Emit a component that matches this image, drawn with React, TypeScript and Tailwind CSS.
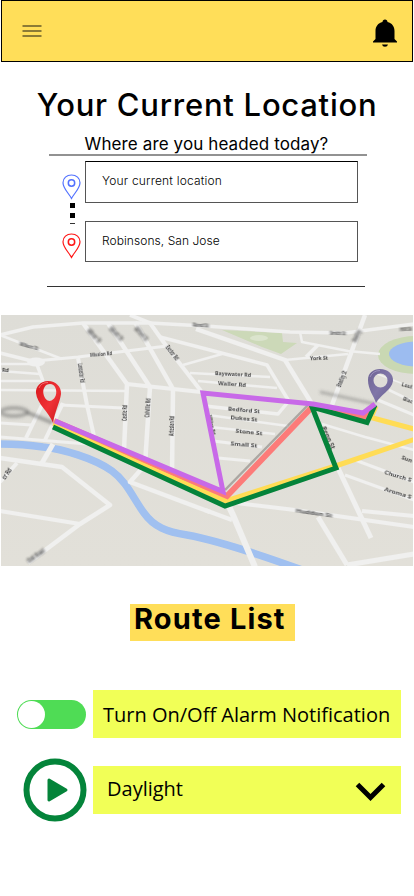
import React from 'react';

const roads: [string, number][] = [
  ['M0 335 L33 327 L83 323 L150 323 L205 326 L290 332 L345 333 L414 324', 3.5],
  ['M130 315 L150 323 L167 347 L201 391', 4],
  ['M0 335 L62 359', 2.5],
  ['M35 361 L78 357 L167 346', 3],
  ['M0 353 L36 362 L43 381', 3.5],
  ['M0 364 H38', 2.5],
  ['M0 371 L40 374', 2.5],
  ['M0 381 H44', 2.5],
  ['M0 390 L127 391', 2.5],
  ['M78 358 L87 405 L96 445', 4],
  ['M83 323 L127 384 L124 450', 4.5],
  ['M108 323 L150 387 L145 465 L130 482 L210 512', 4.5],
  ['M135 322 L173 389 L172 475', 4.5],
  ['M127 384 L201 392', 4],
  ['M60 405 L123 408', 3],
  ['M63 403 L45 440', 4],
  ['M42 405 L26 438', 4],
  ['M0 423 L32 425', 3],
  ['M0 437 L100 445', 3],
  ['M160 337 L210 350 L267 365 L290 403', 3.5],
  ['M183 365 L222 354', 2.5],
  ['M190 373 L270 377', 2.5],
  ['M198 381 L277 388', 2.5],
  ['M205 406 L278 414 L288 402', 3.5],
  ['M208 415 L288 426', 2.5],
  ['M210 427 L275 434', 2.5],
  ['M213 441 L262 447', 3],
  ['M218 458 L250 461', 3],
  ['M196 329 L285 360 L312 404', 4.5],
  ['M285 360 L348 354', 2.5],
  ['M300 332 L302 342 L348 351 L380 354', 2.5],
  ['M318 345 L306 357', 3.5],
  ['M365 315 L332 405', 4.5],
  ['M378 400 L414 415', 3],
  ['M389 390 L414 402', 2.5],
  ['M372 372 L414 388', 1.5],
  ['M322 424 L365 437 L414 450', 2.5],
  ['M355 460 L414 482', 3],
  ['M345 475 L414 500', 3],
  ['M362 511 L414 516', 4],
  ['M0 458 L62 467 L110 505 L80 524 L28 563', 4.5],
  ['M0 511 L80 524', 4],
  ['M17 463 L0 482', 4],
  ['M205 510 L232 520', 4],
  ['M225 498 L233 515 L255 567', 6],
  ['M228 502 L295 510 L414 527', 4],
  ['M318 517 L347 565', 5],
  ['M338 468 L371 538', 5],
  ['M347 565 L414 554', 5],
];

type StreetLabel = { t: string; x: number; y: number; r: number; w: number; soft?: boolean };

const labels: StreetLabel[] = [
  { t: 'Wilson St', x: 29, y: 346, r: 15, w: 19, soft: true },
  { t: 'Mission Rd', x: 101, y: 354, r: -5, w: 22 },
  { t: 'Milner St', x: 94, y: 336, r: 45, w: 17, soft: true },
  { t: 'Elliott St', x: 116, y: 334, r: 45, w: 17, soft: true },
  { t: 'Gilford St', x: 141, y: 334, r: 48, w: 17, soft: true },
  { t: 'Exeter Rd', x: 172, y: 353, r: 52, w: 17 },
  { t: 'Bond St', x: 201, y: 325, r: 4, w: 16, soft: true },
  { t: 'Lancaster Rd', x: 81, y: 373, r: 82, w: 19 },
  { t: 'Castle Rd', x: 125, y: 413, r: -88, w: 16 },
  { t: 'Colville Rd', x: 148, y: 408, r: -86, w: 19 },
  { t: 'Artesian Rd', x: 172, y: 426, r: -88, w: 20 },
  { t: 'Rd', x: 5.5, y: 370, r: 3, w: 7 },
  { t: 'er Rd', x: 7, y: 474, r: -55, w: 12 },
  { t: 'Oak Road', x: 36, y: 556, r: -35, w: 20, soft: true },
  { t: 'Bayswater Rd', x: 233, y: 374, r: 3, w: 36 },
  { t: 'Waller Rd', x: 232, y: 384, r: 4, w: 28 },
  { t: 'Bedford St', x: 244, y: 410, r: 5, w: 32 },
  { t: 'Dukes St', x: 244, y: 418.5, r: 5, w: 27 },
  { t: 'Stone St', x: 249, y: 432, r: 6, w: 27 },
  { t: 'Small St', x: 244, y: 444.5, r: 5, w: 27 },
  { t: 'York St', x: 319, y: 358, r: -2, w: 18 },
  { t: 'Smith St', x: 338, y: 333, r: 2, w: 16, soft: true },
  { t: 'Hill St', x: 406, y: 329, r: -4, w: 12, soft: true },
  { t: 'Bradley', x: 357, y: 336, r: -65, w: 13, soft: true },
  { t: 'Bradley St', x: 342, y: 379, r: -68, w: 17 },
  { t: 'Loui', x: 407, y: 385.5, r: 15, w: 11 },
  { t: 'Blac', x: 408, y: 400, r: 20, w: 10 },
  { t: 'Penn St', x: 328, y: 438, r: 66, w: 24 },
  { t: 'Milton Rd', x: 211, y: 425, r: 78, w: 20 },
  { t: 'Huddon St', x: 314, y: 513, r: 8, w: 37, soft: true },
  { t: 'Sun', x: 407, y: 459, r: 20, w: 11 },
  { t: 'Church S', x: 398, y: 476, r: 17, w: 28 },
  { t: 'Aroma S', x: 398, y: 493, r: 17, w: 28 },
];

function RouteMap() {
  return (
    <svg className="block h-[251px] w-[412px]" viewBox="1 315 412 251">
      <defs>
        <linearGradient id="ground" x1="0" y1="0" x2="0" y2="1">
          <stop offset="0" stopColor="#deddd7" />
          <stop offset="1" stopColor="#e2e0d9" />
        </linearGradient>
        <linearGradient id="redPin" x1="0" y1="0" x2="1" y2="1">
          <stop offset="0" stopColor="#d8161b" />
          <stop offset="0.55" stopColor="#f03236" />
          <stop offset="1" stopColor="#c9181d" />
        </linearGradient>
        <linearGradient id="violetPin" x1="0" y1="0" x2="1" y2="1">
          <stop offset="0" stopColor="#6c6292" />
          <stop offset="0.5" stopColor="#8076a8" />
          <stop offset="1" stopColor="#665d8d" />
        </linearGradient>
        <filter id="soft"><feGaussianBlur stdDeviation="0.7" /></filter>
        <filter id="slight" x="-10%" y="-30%" width="120%" height="160%"><feGaussianBlur stdDeviation="0.35" /></filter>
        <filter id="softer" x="-20%" y="-50%" width="140%" height="200%"><feGaussianBlur stdDeviation="0.9" /></filter>
        <filter id="shade" x="-30%" y="-60%" width="160%" height="220%"><feGaussianBlur stdDeviation="1.7" /></filter>
      </defs>
      <rect x="0" y="315" width="414" height="252" fill="url(#ground)" />
      <g filter="url(#soft)">
        <path d="M222 330 L282 333 L283 342 L297 343 L281 354 L262 347Z" fill="#ccd9b8" />
        <ellipse cx="259" cy="338" rx="9" ry="3" fill="#dbe4cd" />
        <ellipse cx="416" cy="355" rx="38" ry="19" fill="#c9d8b3" />
        <ellipse cx="416" cy="354" rx="27" ry="12.5" fill="#9cbcf0" />
        <path d="M0 444 C17 444 30 445 43 447 C62 449 94 458 112 471 C127 482 133 498 144 513 C154 527 167 532 187 535 C215 540 250 551 305 571" fill="none" stroke="#a0c0f0" strokeWidth="7.5" />
        <g fill="none" stroke="#f0f0ef" strokeLinejoin="round">
          {roads.map(([d, w]) => <path key={d} d={d} strokeWidth={w} />)}
          <path d="M53 444 L42 463" strokeWidth="5" />
        </g>
        <ellipse cx="36" cy="362" rx="9" ry="4.5" fill="#f0f0ef" />
      </g>
      <g fill="none" stroke="#555" filter="url(#shade)">
        <ellipse cx="14" cy="412" rx="13" ry="4" strokeWidth="4" opacity="0.4" />
        <path d="M26 412 L53 423" strokeWidth="4" opacity="0.45" />
        <path d="M320 392 L375 404" strokeWidth="3" opacity="0.35" />
      </g>
      <g fill="#333" fontFamily="'Noto Sans', sans-serif" fontSize="6" fontWeight="700" textAnchor="middle">
        {labels.map((l, i) => (
          <text
            key={i}
            transform={`translate(${l.x} ${l.y}) rotate(${l.r}) scale(1 ${Math.abs(l.r) < 30 ? 0.82 : 1.05})`}
            y="2"
            textLength={l.w}
            lengthAdjust="spacingAndGlyphs"
            filter={l.soft ? 'url(#softer)' : 'url(#slight)'}
            opacity="0.9"
          >
            {l.t}
          </text>
        ))}
      </g>
      <path d="M225 490 L309 404" stroke="#77716d" strokeWidth="2.500" opacity="0.5" filter="url(#soft)" />
      <g fill="none" strokeWidth="5">
        <path d="M54 423 L226 501 L337 465.500 L414 439.500" stroke="#ffdc55" />
        <path d="M376 406 L371 417.500 L414 429" stroke="#ffdc55" />
        <path d="M54 421 L227 496 L313 406 L365 418 L374 405" stroke="#fc7b79" strokeWidth="6" />
        <path d="M53 424 L226 501.500" stroke="#ffdc55" strokeWidth="3.500" />
        <path d="M53 427 L225 506 L336 468 L312 407 L367 422.500 L375 405" stroke="#04833a" />
        <path d="M55 421 L223 491.500 L203 393 L313 404 L363 413 L375 404" stroke="#c869e8" />
      </g>
      <path fillRule="evenodd" fill="url(#redPin)" d="M48 381 C56 381 61.500 387 61 394 C60 402 55 411 53 423 C49 412 37 404 36 393 C35.500 386 41 381 48 381Z M50 384 C45 384 42.500 389 43.500 394 C44.500 399 48 402 51.500 400.500 C55.500 398.500 57.500 393 55.500 388 C54.500 385.500 52.500 384 50 384Z" />
      <path d="M39 388 Q41 382.500 48 382.500" fill="none" stroke="#ff9896" strokeWidth="0.900" opacity="0.7" />
      <path fillRule="evenodd" fill="url(#violetPin)" d="M380 369 C388 369 393.500 374 393 381 C392 390 379 396 376 403 C374 396 368 390 368 380 C368 373 373 369 380 369Z M380.500 373.500 A7 7 0 1 0 380.500 387.500 A7 7 0 1 0 380.500 373.500Z" />
      <path d="M370 377 Q373 370.500 380 370.500" fill="none" stroke="#b1a8d0" strokeWidth="0.900" opacity="0.7" />
    </svg>
  );
}

function Pin({ className }: { className: string }) {
  return (
    <svg className={`block h-[26px] w-[19px] ${className}`} viewBox="0 0 19 26" fill="none" stroke="currentColor" strokeWidth="1.200">
      <path d="M9.500 24.500 C7 19.500 1 14.500 1 8.700 C1 4 4.700 1 9.500 1 C14.300 1 18 4 18 8.700 C18 14.500 12 19.500 9.500 24.500Z" />
      <circle cx="9.500" cy="9" r="3.200" strokeWidth="1.500" />
    </svg>
  );
}

export default function App() {
  return (
    <div className="h-[896px] w-[414px] overflow-hidden bg-white font-['Inter',sans-serif] text-black">
      <header className="mx-px flex h-[62px] items-center justify-between border border-black bg-[#ffde59] pr-[15px] pl-5">
        <svg className="h-3.5 w-[21px]" viewBox="0 0 21 14" fill="none" stroke="#8c7b35" strokeWidth="1.800">
          <path d="M0.500 2 H19.500 M0.500 7 H19.500 M0.500 12 H19.500" />
        </svg>
        <svg className="mt-[3px] h-7 w-6" viewBox="0 0 24 28">
          <path d="M12 0.500 C13.500 0.500 14.500 1.500 14.500 3 C19 4 21.500 7.500 21.500 12 V20 L24 22.500 V23.500 H0 V22.500 L2.500 20 V12 C2.500 7.500 5 4 9.500 3 C9.500 1.500 10.500 0.500 12 0.500Z M9 25.500 H15 Q14.500 27.800 12 27.800 Q9.500 27.800 9 25.500Z" />
        </svg>
      </header>

      <h1 className="mt-[23px] h-10 text-center text-[31px] leading-10 font-medium tracking-[0.74px] whitespace-nowrap">Your Current Location</h1>

      <p className="mr-[47px] ml-[49px] mt-[8px] h-[23px] border-b-2 border-[#929292] pr-[3px] text-center text-[17px] leading-[23px] tracking-[0.11px] whitespace-nowrap">
        Where are you headed today?
      </p>

      <section className="mr-[49px] ml-[47px] flex h-[131px] gap-1 border-b border-[#333] pt-[5px] pl-[15px]">
        <div className="flex w-[19px] flex-col items-center pt-[13px]">
          <Pin className="text-[#5271ff]" />
          <div className="mt-[3px] ml-px flex flex-col items-center">
            <span className="h-[5px] w-[5px] bg-black" />
            <span className="mt-[5px] h-[5px] w-[5px] bg-black" />
            <span className="mt-[5px] h-px w-[5px] bg-[#333]" />
          </div>
          <Pin className="mt-[9px] text-[#ff1616]" />
        </div>
        <div className="flex flex-col gap-[18px] text-xs font-light">
          <div className="h-[42px] w-[273px] border border-[#555] border-t-black pl-4 leading-[38px] tracking-[0.19px]">Your current location</div>
          <div className="h-[41px] w-[273px] border border-[#555] pl-4 leading-[37px] tracking-[0.06px]">Robinsons, San Jose</div>
        </div>
      </section>

      <div className="mt-7 ml-px">
        <RouteMap />
      </div>

      <h2 className="mt-[38px] ml-[130px] h-[37px] w-[165px] bg-[#ffde59] pl-1 text-[29px] leading-[30px] font-bold tracking-[1.15px] whitespace-nowrap">Route List</h2>

      <section className="mt-[49px] flex flex-col gap-5 font-['Open_Sans',sans-serif] text-xl">
        <div className="flex h-12 items-center">
          <div className="mt-px ml-[17px] h-[29px] w-[69px] rounded-full bg-[#4fdc55] p-px">
            <div className="h-[27px] w-[27px] rounded-full bg-white" />
          </div>
          <div className="ml-[7px] flex h-12 w-[308px] items-center bg-[#f1ff57] pt-[2px] pl-[10px] whitespace-nowrap">Turn On/Off Alarm Notification</div>
        </div>
        <div className="flex h-16 items-center">
          <svg className="ml-[23px] h-16 w-16" viewBox="0 0 64 64">
            <circle cx="32" cy="32" r="28.500" fill="none" stroke="#04843a" strokeWidth="6" />
            <path d="M26 22 L43 32 L26 42Z" fill="#04843a" stroke="#04843a" strokeWidth="3" strokeLinejoin="round" />
          </svg>
          <div className="ml-[6px] flex h-12 w-[308px] items-center justify-between bg-[#f1ff57] pr-[15px] pl-[14px]">
            <span className="-mt-[2px]">Daylight</span>
            <svg className="mt-[3px] h-5 w-[31px]" viewBox="0 0 31 20" fill="none" stroke="black" strokeWidth="5">
              <path d="M2.500 2.500 L15.500 15.500 L28.500 2.500" />
            </svg>
          </div>
        </div>
      </section>
    </div>
  );
}
